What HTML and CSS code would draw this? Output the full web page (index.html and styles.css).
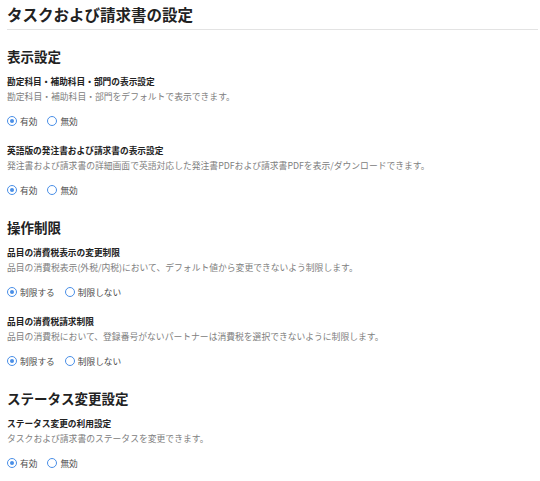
FILE: index.html
```html
<!DOCTYPE html>
<html lang="ja">
<head>
<meta charset="utf-8">
<link rel="stylesheet" href="styles.css">
</head>
<body>
<div class="page">
  <h1 class="title">タスクおよび請求書の設定</h1>

  <section class="section">
    <h2 class="section-title">表示設定</h2>
    <div class="item">
      <h3 class="item-title">勘定科目・補助科目・部門の表示設定</h3>
      <p class="item-desc">勘定科目・補助科目・部門をデフォルトで表示できます。</p>
      <div class="radios">
        <label class="radio"><span class="dot on"></span>有効</label>
        <label class="radio"><span class="dot"></span>無効</label>
      </div>
    </div>
    <div class="item">
      <h3 class="item-title">英語版の発注書および請求書の表示設定</h3>
      <p class="item-desc">発注書および請求書の詳細画面で英語対応した発注書PDFおよび請求書PDFを表示/ダウンロードできます。</p>
      <div class="radios">
        <label class="radio"><span class="dot on"></span>有効</label>
        <label class="radio"><span class="dot"></span>無効</label>
      </div>
    </div>
  </section>

  <section class="section">
    <h2 class="section-title">操作制限</h2>
    <div class="item">
      <h3 class="item-title">品目の消費税表示の変更制限</h3>
      <p class="item-desc">品目の消費税表示(外税/内税)において、デフォルト値から変更できないよう制限します。</p>
      <div class="radios">
        <label class="radio"><span class="dot on"></span>制限する</label>
        <label class="radio"><span class="dot"></span>制限しない</label>
      </div>
    </div>
    <div class="item">
      <h3 class="item-title">品目の消費税請求制限</h3>
      <p class="item-desc">品目の消費税において、登録番号がないパートナーは消費税を選択できないように制限します。</p>
      <div class="radios">
        <label class="radio"><span class="dot on"></span>制限する</label>
        <label class="radio"><span class="dot"></span>制限しない</label>
      </div>
    </div>
  </section>

  <section class="section">
    <h2 class="section-title">ステータス変更設定</h2>
    <div class="item">
      <h3 class="item-title">ステータス変更の利用設定</h3>
      <p class="item-desc">タスクおよび請求書のステータスを変更できます。</p>
      <div class="radios">
        <label class="radio"><span class="dot on"></span>有効</label>
        <label class="radio"><span class="dot"></span>無効</label>
      </div>
    </div>
  </section>
</div>
</body>
</html>
```

FILE: styles.css
```css
* { box-sizing: border-box; }
html, body { margin: 0; padding: 0; background: #fff; }
body {
  font-family: "Noto Sans CJK JP", "Noto Sans", sans-serif;
  color: #222;
}
.page {
  padding: 4px 2px 0 7px;
}
.title {
  margin: 0;
  font-size: 15.5px;
  font-weight: 700;
  line-height: 20px;
  padding-bottom: 5px;
  border-bottom: 1px solid #e3e3e3;
}
.section {
  margin-top: 16px;
}
.section + .section {
  margin-top: 21px;
}
.section-title {
  margin: 0;
  font-size: 13.5px;
  font-weight: 700;
  line-height: 20px;
}
.item {
  margin-top: 10px;
}
.item + .item {
  margin-top: 18px;
}
.item-title {
  margin: 0;
  font-size: 8.7px;
  font-weight: 700;
  line-height: 12px;
}
.item-desc {
  margin: 3px 0 0;
  font-size: 8.8px;
  line-height: 12px;
  color: #808080;
}
.radios {
  display: flex;
  gap: 10px;
  margin-top: 12px;
  height: 12px;
  align-items: center;
}
.radio {
  display: flex;
  align-items: center;
  gap: 3px;
  font-size: 8.7px;
  color: #4a4a4a;
}
.dot {
  width: 10px;
  height: 10px;
  border-radius: 50%;
  border: 1.5px solid #4a8fe7;
  background: #fff;
  position: relative;
}
.dot.on::after {
  content: "";
  position: absolute;
  left: 1.5px;
  top: 1.5px;
  width: 4px;
  height: 4px;
  border-radius: 50%;
  background: #4a8fe7;
}
```
